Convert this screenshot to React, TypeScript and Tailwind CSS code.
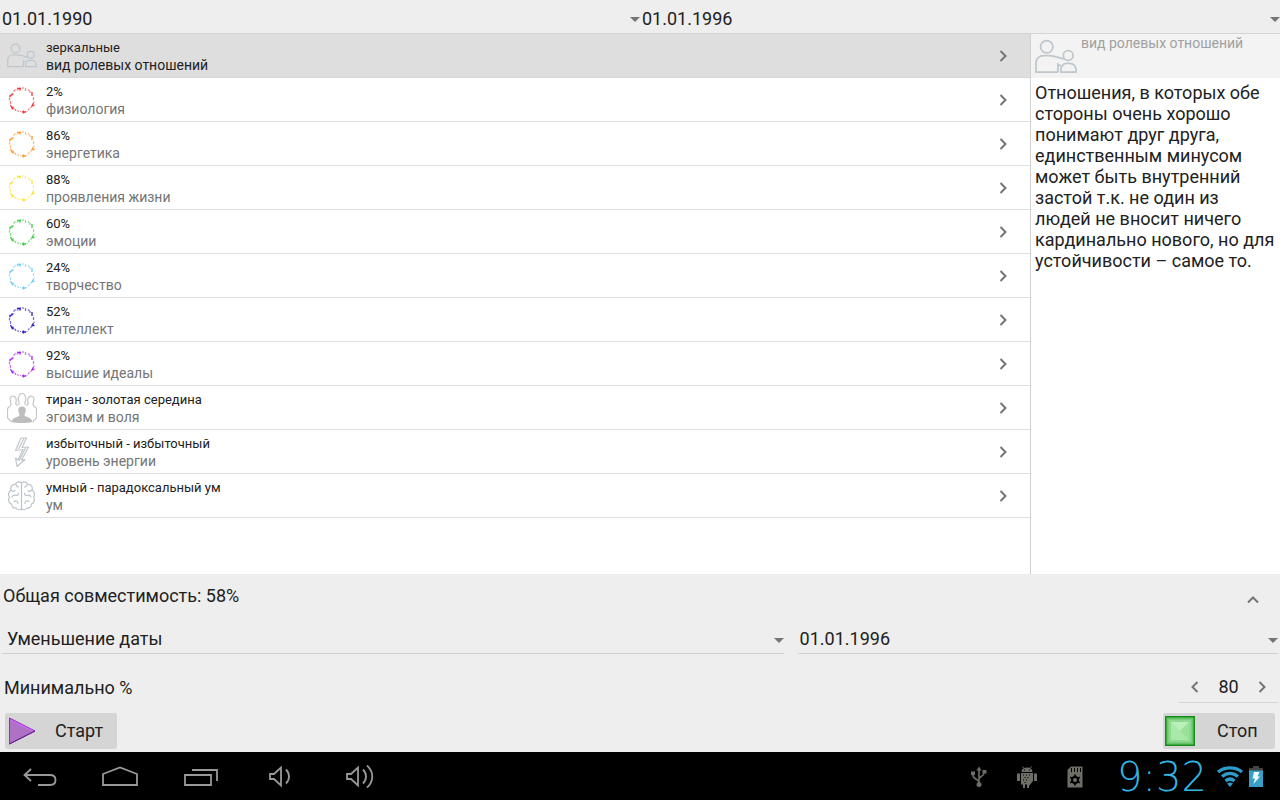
import { useState } from "react";
import type { ReactNode } from "react";

interface Row {
  title: string;
  subtitle: string;
  icon: ReactNode;
}

// short strokes that together make up the chakra ring, 28x28 box
const RING_DARK =
  "M9 2.5h4M12 1.5v3M1.5 10.5l4-3M4 7.5v2M2.5 19l2 4M5 20.5v3M14 26h4M15.5 24.5v3M25.5 17l-2 3.5M26.5 19.5h-2M24 6v4";
const RING_LIGHT =
  "M5.5 5.5l2-2M8.5 4h2M15 1v2M17.5 2v3M20 3.5l1.5 1.5M22 5v2M25.5 11v3M26 15.5v1.5M22.5 22l1-1.5M20 24l1.5-1.5M18.5 25.5h1M12.5 25v1M10 24v2M7.5 23v2M1.5 12v2.5M2.5 15v3M2 8.5v3M6.5 22.5l1 1.500";

function Ring({ color }: { color: string }) {
  return (
    <svg width="30" height="28" viewBox="-1 0 30 28" fill="none" stroke={color}>
      <path d={RING_DARK} strokeWidth="1.3" />
      <path d={RING_LIGHT} strokeWidth="1.2" opacity="0.65" />
    </svg>
  );
}

function PeopleIcon({ width, height }: { width: number; height: number }) {
  return (
    <svg width={width} height={height} viewBox="0 0 43 35" fill="none" stroke="#bfc7cc" strokeWidth="1.8">
      <circle cx="12" cy="7.5" r="6.3" />
      <circle cx="34" cy="16.5" r="5" />
      <path d="M23.5 33.5H1v-9.5c0-4.5 3.5-7.5 8-7.5h5c8 0 11 3.500 16 3.300M23.500 33.500v-8c1 1 2 .5 3 1.500" />
      <path d="M26.500 33.500v-2.500c0-4 3-6.500 6-6.500h3c4 0 6.500 3 6.500 6.500v2.500z" />
    </svg>
  );
}

function CrowdIcon() {
  return (
    <svg width="30" height="30" viewBox="0 0 30 30" fill="none" stroke="#c6c6c6" strokeWidth="1.2">
      <path d="M12 9.500c0-1-.7-1.500-.7-3 0-8 7.400-8 7.400 0 0 1.500-.7 2-.7 3v2.500" />
      <path d="M12 9.500v2.500M11 12.500c-2-.5-2.500-1.500-2-3C10.500 2 3.500 1.500 3 6c0 2 1 3.500 1 5.500 0 2-3.500 2-3.500 5V25l4 4M19 12.500c2-.5 2.500-1.500 2-3C19.500 2 26.500 1.500 27 6c0 2-1 3.500-1 5.500 0 2 3.500 2 3.500 5V25l-4 4" />
      <path
        d="M15 13.500c2.800 0 4 2 3.700 4.500-.2 2-1.200 2.500-1.200 4 0 2 7 1.500 8 7-5 1.300-16 1.300-21 0 1-5.500 8-5 8-7 0-1.500-1-2-1.200-4-.3-2.500.9-4.500 3.700-4.500z"
        fill="#bdbdbd"
        stroke="none"
      />
    </svg>
  );
}

function BoltIcon() {
  return (
    <svg width="30" height="30" viewBox="0 0 30 30" fill="none" stroke="#bfc7cc" strokeWidth="1.2" strokeLinejoin="round">
      <path d="M14 1h5.500l-4.500 9.500 6.500-.5-7 13 3.500-.5L10 29.500 8.500 21l2.500 2 5-10.500-7.500 1z" />
      <path d="M17 1.500L11.500 12M18.500 11L12 24" />
    </svg>
  );
}

function BrainIcon() {
  return (
    <svg width="30" height="30" viewBox="0 0 30 30" fill="none" stroke="#bcc4ca" strokeWidth="1.2" strokeLinecap="round">
      <path d="M14.5 1.500v27M14 1.500c-3-1.500-5 0-5.500 2C5 3 3 6 4 9c-3 2-3 5-1.500 7C.5 19 2 22 4.500 23c0 3 2.500 4.500 4.500 4 1.500 2 4 2 5.500 1M15 1.500c3-1.500 5 0 5.500 2C24 3 26 6 25 9c3 2 3 5 1.500 7 2 3 .5 6-2 7 0 3-2.500 4.500-4.500 4-1.500 2-4 2-5.500 1" />
      <path d="M9.500 4c0 1.500 1 2 2 2M4.500 9.500c1.500 1.500 3 1 3.500 0M5 16c1-2 3-2 4.500-1.500 1.500 0 2-1 2-2.500M7 20.500c2-1.500 4-.5 4 2M19.500 4c0 1.500-1 2-2 2M24.500 9.500c-1.500 1.500-3 1-3.500 0M24 16c-1-2-3-2-4.500-1.500-1.500 0-2-1-2-2.500M22 20.500c-2-1.500-4-.5-4 2" />
    </svg>
  );
}

function Chevron({ className = "" }: { className?: string }) {
  return (
    <svg className={className} width="14" height="14" viewBox="0 0 14 14" fill="none" stroke="#757575" strokeWidth="2">
      <path d="M4.5 2l5 5-5 5" />
    </svg>
  );
}

function Spinner({ label, value, options, className }: { label: string; value: string; options: string[]; className: string }) {
  return (
    <div className="relative">
      <select aria-label={label} defaultValue={value} className={`block w-full appearance-none bg-transparent outline-none ${className}`}>
        {options.map((o) => (
          <option key={o}>{o}</option>
        ))}
      </select>
      <svg className="pointer-events-none absolute right-0 top-1/2" width="10" height="5" viewBox="0 0 10 5">
        <path d="M0 0h10L5 5z" fill="#757575" />
      </svg>
    </div>
  );
}

const rows: Row[] = [
  { title: "зеркальные", subtitle: "вид ролевых отношений", icon: <PeopleIcon width={30} height={25} /> },
  { title: "2%", subtitle: "физиология", icon: <Ring color="#f03a3a" /> },
  { title: "86%", subtitle: "энергетика", icon: <Ring color="#ff9a2e" /> },
  { title: "88%", subtitle: "проявления жизни", icon: <Ring color="#f7e53c" /> },
  { title: "60%", subtitle: "эмоции", icon: <Ring color="#3fce45" /> },
  { title: "24%", subtitle: "творчество", icon: <Ring color="#72cdf7" /> },
  { title: "52%", subtitle: "интеллект", icon: <Ring color="#2a1fc4" /> },
  { title: "92%", subtitle: "высшие идеалы", icon: <Ring color="#a82af0" /> },
  { title: "тиран - золотая середина", subtitle: "эгоизм и воля", icon: <CrowdIcon /> },
  { title: "избыточный - избыточный", subtitle: "уровень энергии", icon: <BoltIcon /> },
  { title: "умный - парадоксальный ум", subtitle: "ум", icon: <BrainIcon /> },
];

function NavBar() {
  return (
    <footer className="flex h-12 items-center justify-between bg-black pt-0.5 pr-4 pl-5">
      <nav className="flex items-center gap-10">
        <button aria-label="Назад">
          <svg width="40" height="24" viewBox="0 0 40 24" fill="none" stroke="#999" strokeWidth="1.8">
            <path d="M11 4L4.500 10l6.500 6M4.500 10h25.500c3.500 0 5.500 2 5.500 5s-2 5-5.500 5H18" />
          </svg>
        </button>
        <button aria-label="Домой">
          <svg width="40" height="24" viewBox="0 0 40 24" fill="none" stroke="#999" strokeWidth="1.8">
            <path d="M3 20V9l17-6.500L37 9v11z" />
          </svg>
        </button>
        <button aria-label="Недавние">
          <svg width="40" height="24" viewBox="0 0 40 24" fill="none" stroke="#999" strokeWidth="1.8">
            <path d="M5 10h26v10H5zM12 5h25v11" />
          </svg>
        </button>
        <button aria-label="Тише">
          <svg width="40" height="24" viewBox="0 0 40 24" fill="none" stroke="#999" strokeWidth="1.8">
            <path d="M10 9h4l7-6.500v18L14 14h-4zM26 4.500c4 4 4 10 0 14" />
          </svg>
        </button>
        <button aria-label="Громче">
          <svg width="40" height="24" viewBox="0 0 40 24" fill="none" stroke="#999" strokeWidth="1.8">
            <path d="M7 9h4l7-6.500v18L11 14H7zM23 4.500c4 4 4 10 0 14M27 .5c7 6 7 16 0 22" />
          </svg>
        </button>
      </nav>

      <div className="flex items-center gap-1">
        <div className="mr-6 flex items-center gap-7">
          <svg width="18" height="24" viewBox="0 0 18 24" fill="none" stroke="#6e6e69" strokeWidth="1.6">
            <path d="M9 20V5M9 17c0-3-6-2-6-7M9 14c0-3 5-2 5-6" />
            <path d="M6.500 5.500L9 1.500l2.500 4zM1 6.500h4v3.500H1zM12.500 5h4v3.500h-4z" fill="#6e6e69" stroke="none" />
            <circle cx="9" cy="19.500" r="2.500" fill="#6e6e69" stroke="none" />
          </svg>
          <svg width="22" height="24" viewBox="0 0 22 24" fill="#6e6e69">
            <path d="M5.500 7c0-3 2-4.500 5.500-4.500S16.500 4 16.500 7zM1 8.500h3V16H1zM18 8.500h3V16h-3zM5 8h12v8l-4 5v2h-2v-3.500H9V23H7v-3.500H5z" />
            <path d="M6.500 1.500L8 3.500M15.500 1.500L14 3.500" stroke="#6e6e69" />
            <path d="M8 5h1M13 5h1M7 10h1M10 10h1M13 10h1M8.500 12.500h1M11.500 12.500h1M7 15h1M10 15h1M8.500 17.500h1" stroke="#000" />
          </svg>
          <svg width="18" height="24" viewBox="0 0 18 24">
            <path d="M5 1.500h11.500v21H1.500V5z" fill="#6e6e69" />
            <path d="M5.500 3v4M8.500 3v4M11.500 3v4M14.500 3v4" stroke="#000" />
            <circle cx="9" cy="15" r="3" fill="none" stroke="#000" strokeWidth="2" />
            <path d="M9 9.500v3M9 17.500v3M4.200 12.200l2.600 1.500M11.200 16.300l2.600 1.500M4.200 17.800l2.600-1.500M11.200 13.700l2.600-1.500" stroke="#000" strokeWidth="1.8" />
          </svg>
        </div>
        <time className="w-[100px] text-center font-['DejaVu_Sans',sans-serif] text-[40px] leading-10 font-extralight text-[#33b5e5]">9:32</time>
        <svg width="28" height="24" viewBox="0 0 28 24" fill="none" stroke="#2c9ccb" strokeWidth="3.4">
          <path d="M2 7c7-5.500 17-5.500 24 0M6 11.500c5-4 11-4 16 0M9.500 16c3-2.500 6-2.500 9 0" />
          <path d="M11 18.500c2-1.500 4-1.500 6 0l-3 3.500z" fill="#2c9ccb" stroke="none" />
        </svg>
        <svg width="16" height="24" viewBox="0 0 16 24">
          <path d="M5 1h6v2h4v4H1V3h4z" fill="#444" />
          <path d="M1 5.500h14V22H1z" fill="#37a0c9" />
          <path d="M6 7h5.500L9.500 11.500H12L5.500 19 7 13.500H4.500z" fill="#f2fbff" />
        </svg>
      </div>
    </footer>
  );
}

export default function App() {
  const [selected, setSelected] = useState(0);
  const [minimum, setMinimum] = useState(80);

  return (
    <div className="flex min-h-screen flex-col bg-[#eeeeee] font-['Roboto',sans-serif] text-lg text-[#212121]">
      <header className="grid grid-cols-2 border-b border-[#d4d4d4]">
        <Spinner label="Первая дата" value="01.01.1990" options={["01.01.1990", "01.01.1996"]} className="h-[33px] pt-1 pl-0.5" />
        <Spinner label="Вторая дата" value="01.01.1996" options={["01.01.1990", "01.01.1996"]} className="h-[33px] pt-1 pl-0.5" />
      </header>

      <main className="flex flex-1 bg-white">
        <ul className="flex-1">
          {rows.map((row, i) => (
            <li key={row.title}>
              <button
                onClick={() => setSelected(i)}
                className={`flex h-11 w-full items-center border-b pr-5 pl-[7px] text-left ${
                  i === selected ? "border-[#d6d6d6] bg-[#dedede]" : "border-[#e0e0e0]"
                }`}
              >
                <span className="flex w-[39px] shrink-0">{row.icon}</span>
                <span className="flex-1">
                  <span className="block text-[13px] leading-[18px]">{row.title}</span>
                  <span className={`block text-sm leading-4 ${i === selected ? "" : "text-[#757575]"}`}>{row.subtitle}</span>
                </span>
                <Chevron />
              </button>
            </li>
          ))}
        </ul>

        <aside className="w-[250px] border-l border-[#d0d0d0]">
          <div className="flex h-11 gap-1 bg-[#f3f3f3] pl-1">
            <span className="pt-[5px]">
              <PeopleIcon width={42} height={35} />
            </span>
            <h2 className="text-sm leading-[18px] text-[#a0a0a0]">{rows[0].subtitle}</h2>
          </div>
          <p className="px-1 pt-1 leading-[21px]">
            Отношения, в которых обе стороны очень хорошо понимают друг друга, единственным минусом может быть внутренний
            застой т.к. не один из людей не вносит ничего кардинально нового, но для устойчивости – самое то.
          </p>
        </aside>
      </main>

      <section>
        <div className="flex h-12 items-center justify-between pr-5 pl-[3px]">
          <span className="pb-1">Общая совместимость: 58%</span>
          <button aria-label="Свернуть" className="pt-1">
            <Chevron className="-rotate-90" />
          </button>
        </div>

        <div className="grid grid-cols-[781fr_480fr] gap-[14px] px-0.5">
          <div className="border-b border-[#d0d0d0]">
            <Spinner label="Направление" value="Уменьшение даты" options={["Уменьшение даты", "Увеличение даты"]} className="h-[31px] pt-0.5 pl-[5px]" />
          </div>
          <div className="border-b border-[#d0d0d0]">
            <Spinner label="Дата поиска" value="01.01.1996" options={["01.01.1990", "01.01.1996"]} className="h-[31px] pt-0.5 pl-0.5" />
          </div>
        </div>

        <div className="flex items-end justify-between pt-[18px] pr-0.5 pl-1">
          <label htmlFor="minimum" className="leading-[30px]">
            Минимально %
          </label>
          <div className="flex h-[31px] items-center border-b border-[#d4d4d4] px-[9px]">
            <button aria-label="Меньше" onClick={() => setMinimum(minimum - 1)}>
              <Chevron className="rotate-180" />
            </button>
            <input
              id="minimum"
              value={minimum}
              onChange={(e) => setMinimum(Number(e.target.value) || 0)}
              className="w-[53px] bg-transparent text-center outline-none"
            />
            <button aria-label="Больше" onClick={() => setMinimum(minimum + 1)}>
              <Chevron />
            </button>
          </div>
        </div>

        <div className="flex justify-between px-[5px] pt-2.5 pb-[3px]">
          <button className="flex h-9 w-28 items-center rounded-xs bg-[#d5d5d5] pl-1">
            <svg width="27" height="28" viewBox="0 0 27 28">
              <path d="M.5 1l25.500 13L.5 27z" fill="#ad72c4" stroke="#9a2cc4" />
              <path d="M2 3.500L23.500 14" stroke="#c46bea" strokeWidth="1.5" />
              <path d="M.5 27L26 14" stroke="#5d1b86" />
            </svg>
            <span className="pl-[19px]">Старт</span>
          </button>
          <button className="flex h-9 w-28 items-center rounded-xs bg-[#d5d5d5] pl-0.5">
            <svg width="30" height="30" viewBox="0 0 30 30">
              <path d="M0 0h30v30H0z" fill="#178a1c" />
              <path d="M1.500 1.500h27v27h-27z" fill="#65c466" />
              <path d="M3.500 3.500h23v23h-23z" fill="#90d891" />
              <path d="M6 6h18v18H6z" fill="#a8e8a8" />
              <path d="M6 6h18l-9 9z" fill="#b9f0b9" />
              <path d="M24 6v18l-9-9z" fill="#9be09b" />
            </svg>
            <span className="pl-[22px]">Стоп</span>
          </button>
        </div>
      </section>

      <NavBar />
    </div>
  );
}
